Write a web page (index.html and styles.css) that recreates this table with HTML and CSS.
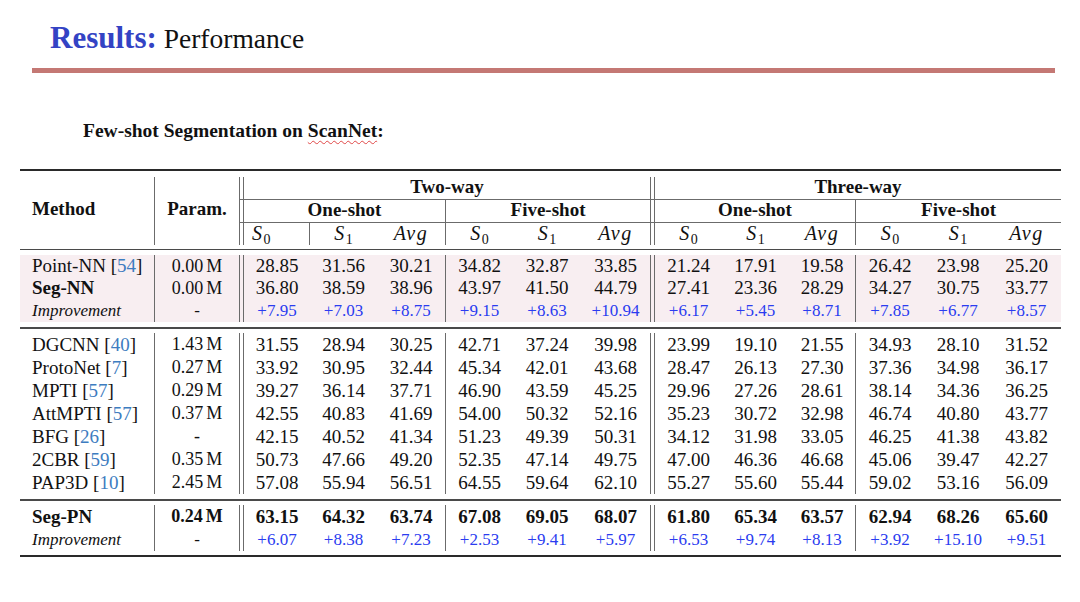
FILE: index.html
```html
<!DOCTYPE html>
<html>
<head>
<meta charset="utf-8">
<link rel="stylesheet" href="styles.css">
</head>
<body>
<div class="slide">
  <h1 class="title"><span class="accent">Results:</span> Performance</h1>
  <div class="bar"></div>
  <h2 class="subtitle">Few-shot Segmentation on <span class="spell">ScanNet</span>:</h2>

  <div class="tbl">
    <div class="rule thick"></div>
    <div class="grid head">
      <div class="h-method">Method</div>
      <div class="h-param">Param.</div>
      <div class="way two dl">Two-way</div>
      <div class="way three dl">Three-way</div>
      <div class="shot sa dl">One-shot</div>
      <div class="shot sb sl">Five-shot</div>
      <div class="shot sc dl">One-shot</div>
      <div class="shot sd sl">Five-shot</div>
      <div class="row mrow">
        <div class="m dl"><i>S</i><sub>0</sub></div><div class="m"><i>S</i><sub>1</sub></div><div class="m"><i>Avg</i></div>
        <div class="m sl"><i>S</i><sub>0</sub></div><div class="m"><i>S</i><sub>1</sub></div><div class="m"><i>Avg</i></div>
        <div class="m dl"><i>S</i><sub>0</sub></div><div class="m"><i>S</i><sub>1</sub></div><div class="m"><i>Avg</i></div>
        <div class="m sl"><i>S</i><sub>0</sub></div><div class="m"><i>S</i><sub>1</sub></div><div class="m"><i>Avg</i></div>
      </div>
    </div>
    <div class="rule"></div>

    <div class="grid sec sec1">
      <div class="row"><div>Point-NN [<span class="ref">54</span>]</div><div>0.00 M</div><div>28.85</div><div>31.56</div><div>30.21</div><div>34.82</div><div>32.87</div><div>33.85</div><div>21.24</div><div>17.91</div><div>19.58</div><div>26.42</div><div>23.98</div><div>25.20</div></div>
      <div class="row"><div class="b">Seg-NN</div><div>0.00 M</div><div>36.80</div><div>38.59</div><div>38.96</div><div>43.97</div><div>41.50</div><div>44.79</div><div>27.41</div><div>23.36</div><div>28.29</div><div>34.27</div><div>30.75</div><div>33.77</div></div>
      <div class="row imp"><div>Improvement</div><div>-</div><div>+7.95</div><div>+7.03</div><div>+8.75</div><div>+9.15</div><div>+8.63</div><div>+10.94</div><div>+6.17</div><div>+5.45</div><div>+8.71</div><div>+7.85</div><div>+6.77</div><div>+8.57</div></div>
    </div>
    <div class="rule"></div>

    <div class="grid sec">
      <div class="row"><div>DGCNN [<span class="ref">40</span>]</div><div>1.43 M</div><div>31.55</div><div>28.94</div><div>30.25</div><div>42.71</div><div>37.24</div><div>39.98</div><div>23.99</div><div>19.10</div><div>21.55</div><div>34.93</div><div>28.10</div><div>31.52</div></div>
      <div class="row"><div>ProtoNet [<span class="ref">7</span>]</div><div>0.27 M</div><div>33.92</div><div>30.95</div><div>32.44</div><div>45.34</div><div>42.01</div><div>43.68</div><div>28.47</div><div>26.13</div><div>27.30</div><div>37.36</div><div>34.98</div><div>36.17</div></div>
      <div class="row"><div>MPTI [<span class="ref">57</span>]</div><div>0.29 M</div><div>39.27</div><div>36.14</div><div>37.71</div><div>46.90</div><div>43.59</div><div>45.25</div><div>29.96</div><div>27.26</div><div>28.61</div><div>38.14</div><div>34.36</div><div>36.25</div></div>
      <div class="row"><div>AttMPTI [<span class="ref">57</span>]</div><div>0.37 M</div><div>42.55</div><div>40.83</div><div>41.69</div><div>54.00</div><div>50.32</div><div>52.16</div><div>35.23</div><div>30.72</div><div>32.98</div><div>46.74</div><div>40.80</div><div>43.77</div></div>
      <div class="row"><div>BFG [<span class="ref">26</span>]</div><div>-</div><div>42.15</div><div>40.52</div><div>41.34</div><div>51.23</div><div>49.39</div><div>50.31</div><div>34.12</div><div>31.98</div><div>33.05</div><div>46.25</div><div>41.38</div><div>43.82</div></div>
      <div class="row"><div>2CBR [<span class="ref">59</span>]</div><div>0.35 M</div><div>50.73</div><div>47.66</div><div>49.20</div><div>52.35</div><div>47.14</div><div>49.75</div><div>47.00</div><div>46.36</div><div>46.68</div><div>45.06</div><div>39.47</div><div>42.27</div></div>
      <div class="row"><div>PAP3D [<span class="ref">10</span>]</div><div>2.45 M</div><div>57.08</div><div>55.94</div><div>56.51</div><div>64.55</div><div>59.64</div><div>62.10</div><div>55.27</div><div>55.60</div><div>55.44</div><div>59.02</div><div>53.16</div><div>56.09</div></div>
    </div>
    <div class="rule"></div>

    <div class="grid sec">
      <div class="row best"><div>Seg-PN</div><div>0.24 M</div><div>63.15</div><div>64.32</div><div>63.74</div><div>67.08</div><div>69.05</div><div>68.07</div><div>61.80</div><div>65.34</div><div>63.57</div><div>62.94</div><div>68.26</div><div>65.60</div></div>
      <div class="row imp"><div>Improvement</div><div>-</div><div>+6.07</div><div>+8.38</div><div>+7.23</div><div>+2.53</div><div>+9.41</div><div>+5.97</div><div>+6.53</div><div>+9.74</div><div>+8.13</div><div>+3.92</div><div>+15.10</div><div>+9.51</div></div>
    </div>
    <div class="rule thick bottom"></div>
  </div>
</div>
</body>
</html>
```

FILE: styles.css
```css
* { box-sizing: border-box; }

:root {
  --v: #6b6b6b;
}

body {
  margin: 0;
  background: #ffffff;
  font-family: "Liberation Serif", "Times New Roman", serif;
  color: #111111;
}

.slide {
  width: 1080px;
  height: 602px;
  overflow: hidden;
}

.title {
  margin: 0;
  padding: 20px 0 0 50px;
  font-size: 27.5px;
  font-weight: normal;
  line-height: 36px;
}

.accent {
  color: #3343c4;
  font-weight: bold;
  font-size: 31px;
}

.bar {
  margin: 11px 0 0 32px;
  width: 1023px;
  height: 5px;
  background: #c47874;
}

.subtitle {
  margin: 45.5px 0 0 83px;
  font-size: 19.5px;
  font-weight: bold;
  line-height: 24px;
}

.spell {
  text-decoration: underline wavy #e04848;
  text-decoration-thickness: 1px;
  text-underline-offset: 3px;
}

.tbl {
  margin: 26px 0 0 20px;
  width: 1041px;
}

.rule {
  height: 1.5px;
  background: #4a4a4a;
  margin-top: 5px;
}

.rule.thick {
  height: 2px;
  background: #2a2a2a;
  margin-top: 0;
}

.rule.bottom {
  margin-top: 4px;
}

.grid {
  display: grid;
  grid-template-columns: 135px 84px 71px 67px 68px 68px 68px 69px 72px 67px 66px 69px 68px 69px;
}

.head {
  margin-top: 6px;
  grid-template-rows: 23px 23px 22px;
  font-weight: bold;
  font-size: 19px;
  line-height: 20px;
  text-align: center;
}

.head + .rule {
  margin-top: 4px;
}

.h-method {
  grid-column: 1;
  grid-row: 1 / 4;
  display: flex;
  align-items: center;
  padding: 0 0 3px 12px;
  border-right: 1px solid var(--v);
}

.h-param {
  grid-column: 2;
  grid-row: 1 / 4;
  display: flex;
  align-items: center;
  justify-content: center;
  padding-bottom: 3px;
}

.way {
  grid-row: 1;
  border-bottom: 1px solid var(--v);
}
.way.two { grid-column: 3 / 9; }
.way.three { grid-column: 9 / 15; }

.shot {
  grid-row: 2;
  border-bottom: 1px solid var(--v);
}
.shot.sa { grid-column: 3 / 6; }
.shot.sb { grid-column: 6 / 9; }
.shot.sc { grid-column: 9 / 12; }
.shot.sd { grid-column: 12 / 15; }

.mrow > * {
  grid-row: 3;
}

.m {
  font-weight: normal;
  font-size: 20px;
}

.m i {
  letter-spacing: 1.5px;
}

.m sub {
  font-style: normal;
  font-size: 14px;
  line-height: 0;
  vertical-align: -4px;
  letter-spacing: 0;
}

.dl {
  border-left: 1px solid var(--v);
  padding-left: 4px;
  background: linear-gradient(var(--v), var(--v)) 3px 0 / 1px 100% no-repeat;
}

.sl {
  border-left: 1px solid var(--v);
}

.sec {
  margin-top: 4.5px;
  grid-auto-rows: 23px;
  line-height: 23px;
  font-size: 19px;
}

.sec1 {
  grid-auto-rows: 22.67px;
  line-height: 22.67px;
  background: #f8eef1;
}

.row {
  display: contents;
}

.row > * {
  text-align: center;
  white-space: nowrap;
}

.row > :nth-child(1) {
  text-align: left;
  padding-left: 12px;
  border-right: 1px solid var(--v);
}

.sec .row > :nth-child(2) {
  font-size: 18px;
  word-spacing: -1.5px;
}

.sec .row > :nth-child(3),
.sec .row > :nth-child(9) {
  border-left: 1px solid var(--v);
  padding-left: 4px;
  background: linear-gradient(var(--v), var(--v)) 3px 0 / 1px 100% no-repeat;
}

.sec .row > :nth-child(6),
.sec .row > :nth-child(12) {
  border-left: 1px solid var(--v);
}

.b,
.best {
  font-weight: bold;
}

.ref {
  color: #3d7cc0;
}

.imp > * {
  font-size: 17px;
  color: #2b3cf0;
}

.imp > :nth-child(1) {
  font-style: italic;
  color: #111111;
}

.sec .imp > :nth-child(2) {
  color: #111111;
  font-size: 17px;
}
```
